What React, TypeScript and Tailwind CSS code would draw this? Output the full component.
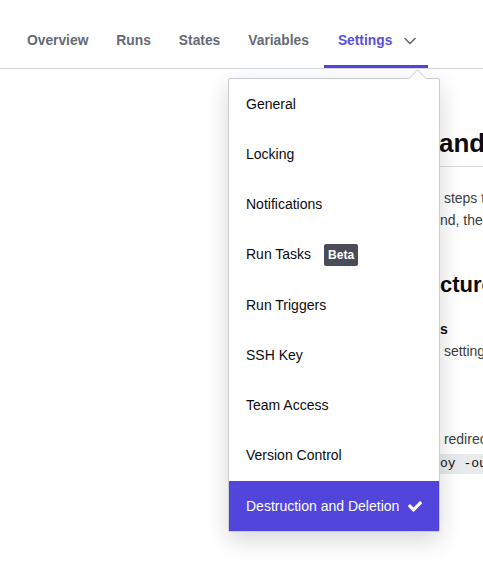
const tabs = ["Overview", "Runs", "States", "Variables"];

const items = [
  "General",
  "Locking",
  "Notifications",
  "Run Tasks",
  "Run Triggers",
  "SSH Key",
  "Team Access",
  "Version Control",
];

function Check() {
  return (
    <svg viewBox="0 0 16 12" className="w-[14px] h-[11px]" fill="white">
      <path d="M5.6 11.6 0.3 6.3a1 1 0 0 1 0-1.4l1.2-1.2a1 1 0 0 1 1.4 0l3.4 3.4L13.1 0.3a1 1 0 0 1 1.4 0l1.2 1.2a1 1 0 0 1 0 1.4L7 11.6a1 1 0 0 1-1.4 0z" />
    </svg>
  );
}

function Chevron() {
  return (
    <svg viewBox="0 0 12 8" className="w-[12px] h-[8px]" fill="none" stroke="#656a76" strokeWidth={1.6} strokeLinecap="round" strokeLinejoin="round">
      <path d="M1 1.5 6 6.5 11 1.5" />
    </svg>
  );
}

export default function App() {
  return (
    <div className="relative w-[483px] h-[564px] overflow-hidden bg-white font-['Liberation_Sans',Arial,sans-serif]">
      {/* Tabs */}
      <nav className="flex items-end h-[69px] border-b border-[#d6d9de] pl-[13px]">
        {tabs.map((t) => (
          <div key={t} className="px-[14px] h-[68px] flex items-center pt-[14px] text-[13.8px] font-bold text-[#656a76]">
            {t}
          </div>
        ))}
        <div className="relative ml-[1px] pl-[14px] pr-[12px] h-[68px] flex items-center pt-[14px] gap-[12px] text-[13.8px] font-bold text-[#5a4fe0]">
          Settings
          <Chevron />
          <div className="absolute left-0 right-0 bottom-0 h-[3px] bg-[#5145dc]" />
        </div>
      </nav>

      {/* Page content behind the menu */}
      <main className="ml-[440px] whitespace-nowrap text-[#3b3d45]">
        <h1 className="mt-[58px] text-[26px] leading-[32px] font-bold text-[#0c0c0e] -ml-[1px]">and</h1>
        <div className="mt-[7px] border-t border-[#d6d9de]" />
        <p className="mt-[20px] text-[14px] leading-[22px]"> &nbsp;steps to</p>
        <p className="text-[14px] leading-[22px]">nd, the</p>
        <h2 className="mt-[40px] text-[22px] leading-[28px] font-bold text-[#0c0c0e]">cture</h2>
        <p className="mt-[19px] text-[14px] leading-[22px] font-bold text-[#0c0c0e]">s</p>
        <p className="text-[14px] leading-[22px]">&nbsp;settings</p>
        <p className="mt-[66px] text-[14px] leading-[22px]">&nbsp;redirect</p>
        <p className="-mt-[2px] inline-block bg-[#e9eaec] text-[13px] leading-[20px] font-['Liberation_Mono',monospace] text-[#0c0c0e]">oy -out</p>
      </main>

      {/* Dropdown menu */}
      <div className="absolute left-[228px] top-[78px] w-[212px] bg-white border border-[#c8ccd3] rounded-[2px] shadow-[0_8px_24px_rgba(0,0,0,0.16)]">
        <div className="absolute -top-[7px] right-[15px] w-[13px] h-[13px] rotate-45 bg-white border-l border-t border-[#d6d9de]" />
        <ul className="relative">
          {items.map((it) => (
            <li key={it} className="h-[50.25px] flex items-center pl-[17px] text-[14px] text-[#0c0c0e]">
              {it}
              {it === "Run Tasks" && (
                <span className="ml-[13px] rounded-[2px] bg-[#4a4d57] px-[4px] h-[22px] flex items-center text-[12px] font-bold text-white">
                  Beta
                </span>
              )}
            </li>
          ))}
          <li className="h-[50px] flex items-center justify-between pl-[17px] pr-[17px] bg-[#5145dc] text-[14px] text-white">
            Destruction and Deletion
            <Check />
          </li>
        </ul>
      </div>
    </div>
  );
}
